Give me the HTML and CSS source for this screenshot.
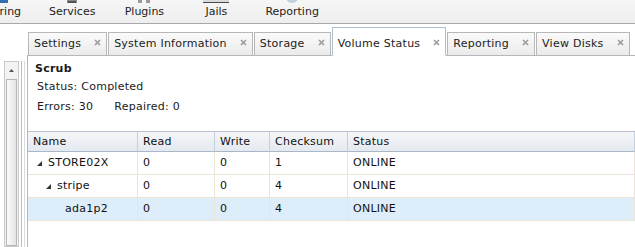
FILE: index.html
```html
<!DOCTYPE html>
<html lang="en">
<head>
    <meta name="viewport" content="width=device-width, initial-scale=1.0">
    <title>Volume Status</title>
    <link rel="stylesheet" href="styles.css">
</head>
<body>
    <div class="topbar">
        <nav class="nav">
            <div class="navitem">
                <svg class="navicon" width="32" height="24" viewBox="0 0 32 24"><rect x="8" y="4" width="16" height="20" fill="#2f6fb3"/></svg>
                <span>Sharing</span>
            </div>
            <div class="navitem">
                <svg class="navicon" width="32" height="24" viewBox="0 0 32 24"><rect x="11" y="14" width="10" height="10" fill="#8a8a8a"/><rect x="12" y="22" width="8" height="2" fill="#555"/></svg>
                <span>Services</span>
            </div>
            <div class="navitem">
                <svg class="navicon" width="32" height="24" viewBox="0 0 32 24"><rect x="10" y="18" width="4" height="6" fill="#9a9a9a"/><rect x="18" y="18" width="4" height="6" fill="#9a9a9a"/></svg>
                <span>Plugins</span>
            </div>
            <div class="navitem">
                <svg class="navicon" width="34" height="24" viewBox="0 0 34 24"><rect x="4" y="6" width="26" height="18" fill="#dadada"/><rect x="4" y="23" width="26" height="1" fill="#4a4a4a"/></svg>
                <span>Jails</span>
            </div>
            <div class="navitem">
                <svg class="navicon" width="32" height="24" viewBox="0 0 32 24"><ellipse cx="16" cy="16" rx="7" ry="8" fill="#c2cfdc"/></svg>
                <span>Reporting</span>
            </div>
        </nav>
    </div>

    <div class="layout">
        <aside class="sidebar">
            <div class="scrollbar">
                <div class="sb-up">
                    <svg width="5" height="3" viewBox="0 0 5 3"><path d="M0 3L2.5 0L5 3Z" fill="#555"/></svg>
                </div>
                <div class="sb-thumb"></div>
            </div>
            <div class="sb-edge"></div>
            <div class="sb-edge light"></div>
        </aside>

        <main class="main">
            <div class="tabs">
                <div class="tab"><span>Settings</span><svg class="close" width="7" height="7" viewBox="0 0 7 7"><path d="M1 1L6 6M6 1L1 6"/></svg></div>
                <div class="tab"><span>System Information</span><svg class="close" width="7" height="7" viewBox="0 0 7 7"><path d="M1 1L6 6M6 1L1 6"/></svg></div>
                <div class="tab"><span>Storage</span><svg class="close" width="7" height="7" viewBox="0 0 7 7"><path d="M1 1L6 6M6 1L1 6"/></svg></div>
                <div class="tab active"><span>Volume Status</span><svg class="close" width="7" height="7" viewBox="0 0 7 7"><path d="M1 1L6 6M6 1L1 6"/></svg></div>
                <div class="tab"><span>Reporting</span><svg class="close" width="7" height="7" viewBox="0 0 7 7"><path d="M1 1L6 6M6 1L1 6"/></svg></div>
                <div class="tab"><span>View Disks</span><svg class="close" width="7" height="7" viewBox="0 0 7 7"><path d="M1 1L6 6M6 1L1 6"/></svg></div>
            </div>

            <div class="panel">
                <div class="scrub">
                    <div class="scrub-title">Scrub</div>
                    <div class="scrub-line">Status: Completed</div>
                    <div class="scrub-line errors"><span>Errors: 30</span><span class="repaired">Repaired: 0</span></div>
                </div>

                <div class="grid">
                    <div class="grid-row header">
                        <div class="cell">Name</div>
                        <div class="cell">Read</div>
                        <div class="cell">Write</div>
                        <div class="cell">Checksum</div>
                        <div class="cell">Status</div>
                    </div>
                    <div class="grid-row">
                        <div class="cell name"><span class="expando"><svg width="5" height="5" viewBox="0 0 5 5"><path d="M5 0V5H0Z" fill="#333"/></svg></span>STORE02X</div>
                        <div class="cell">0</div>
                        <div class="cell">0</div>
                        <div class="cell">1</div>
                        <div class="cell">ONLINE</div>
                    </div>
                    <div class="grid-row">
                        <div class="cell name lvl1"><span class="expando"><svg width="5" height="5" viewBox="0 0 5 5"><path d="M5 0V5H0Z" fill="#333"/></svg></span>stripe</div>
                        <div class="cell">0</div>
                        <div class="cell">0</div>
                        <div class="cell">4</div>
                        <div class="cell">ONLINE</div>
                    </div>
                    <div class="grid-row selected">
                        <div class="cell name lvl2"><span class="expando"></span>ada1p2</div>
                        <div class="cell">0</div>
                        <div class="cell">0</div>
                        <div class="cell">4</div>
                        <div class="cell">ONLINE</div>
                    </div>
                </div>
            </div>
        </main>
    </div>
</body>
</html>
```

FILE: styles.css
```css
* {
    margin: 0;
    padding: 0;
    box-sizing: border-box;
}
body {
    font-family: 'DejaVu Sans', Verdana, sans-serif;
    font-size: 11px;
    letter-spacing: 0.25px;
    color: #1a1a1a;
    background: #fff;
    height: 247px;
    overflow: hidden;
}

/* top navigation */
.topbar {
    height: 24px;
    overflow: hidden;
    background: linear-gradient(#f6f6f6, #eeeeee);
    border-bottom: 1px solid #a9a9a9;
    display: flex;
    align-items: flex-end;
}
.nav {
    display: flex;
    align-items: flex-end;
    margin-left: -36px;
    letter-spacing: 0;
}
.navitem {
    display: flex;
    flex-direction: column;
    align-items: center;
    min-width: 46px;
    padding: 0 13px 5px;
    box-sizing: content-box;
    color: #222;
}
.navitem span {
    line-height: 13px;
    white-space: nowrap;
}
.navicon {
    display: block;
    margin-bottom: 2px;
}

.layout {
    display: flex;
    height: calc(100% - 24px);
}

/* left scroller */
.sidebar {
    width: 27px;
    display: flex;
    padding: 37px 0 0 4px;
}
.scrollbar {
    width: 15px;
    border: 1px solid #c9c9c9;
    background: #f3f3f3;
    display: flex;
    flex-direction: column;
}
.sb-up {
    height: 16px;
    display: flex;
    justify-content: center;
    align-items: center;
}
.sb-thumb {
    flex: 1;
    margin: 1px 1px 0;
    border: 1px solid #b5b5b5;
    background: linear-gradient(90deg, #fbfbfb, #e3e3e3);
}
.sb-edge {
    width: 1px;
    margin-left: 2px;
    background: #bdbdbd;
}
.sb-edge.light {
    background: #dadada;
}

.main {
    flex: 1;
    display: flex;
    flex-direction: column;
    min-width: 0;
}

/* tabs */
.tabs {
    display: flex;
    align-items: flex-end;
    gap: 1px;
    padding: 3px 0 0 1px;
    border-bottom: 1px solid #b5b5b5;
}
.tab {
    display: flex;
    align-items: flex-end;
    height: 24px;
    margin-bottom: -1px;
    padding: 0 5px 0 5px;
    border: 1px solid #b7b7b7;
    background: linear-gradient(#fafafa, #ebebeb);
    color: #222;
    white-space: nowrap;
}
.tab span {
    line-height: 22px;
}
.tab .close {
    margin: 0 0 9px 13px;
    stroke: #9d9d9d;
    stroke-width: 1.7;
}
.tab.active {
    height: 29px;
    background: #fff;
    border-color: #adbfd3;
    border-bottom-color: #fff;
}

/* panel */
.panel {
    flex: 1;
    border-left: 1px solid #b5b5b5;
}
.scrub {
    padding: 4px 0 0 7px;
}
.scrub-title {
    font-weight: bold;
    line-height: 18px;
    color: #1a1a1a;
}
.scrub-line {
    line-height: 18px;
    padding-left: 2px;
}
.errors {
    line-height: 19px;
    margin-top: 1px;
}
.repaired {
    margin-left: 21px;
}

/* volume grid */
.grid {
    margin-top: 15px;
    border-top: 1px solid #b9c2ce;
}
.grid-row {
    display: grid;
    grid-template-columns: 110px 77px 55px 78px 1fr;
}
.cell {
    height: 23px;
    line-height: 22px;
    padding-left: 5px;
    border-right: 1px solid #ece4d9;
    border-bottom: 1px solid #ece4d9;
    white-space: nowrap;
    color: #111;
}
.header .cell {
    height: 20px;
    line-height: 19px;
    background: linear-gradient(#f4f6f9, #e4e9f0);
    border-right-color: #c6ceda;
    border-bottom-color: #aab7c7;
}
.selected .cell {
    background: #deedfa;
}
.cell.name {
    padding-left: 4px;
}
.cell.lvl1 {
    padding-left: 13px;
}
.cell.lvl2 {
    padding-left: 21px;
}
.expando {
    display: inline-block;
    width: 16px;
    padding-left: 5px;
}
.expando svg {
    vertical-align: baseline;
}
```
